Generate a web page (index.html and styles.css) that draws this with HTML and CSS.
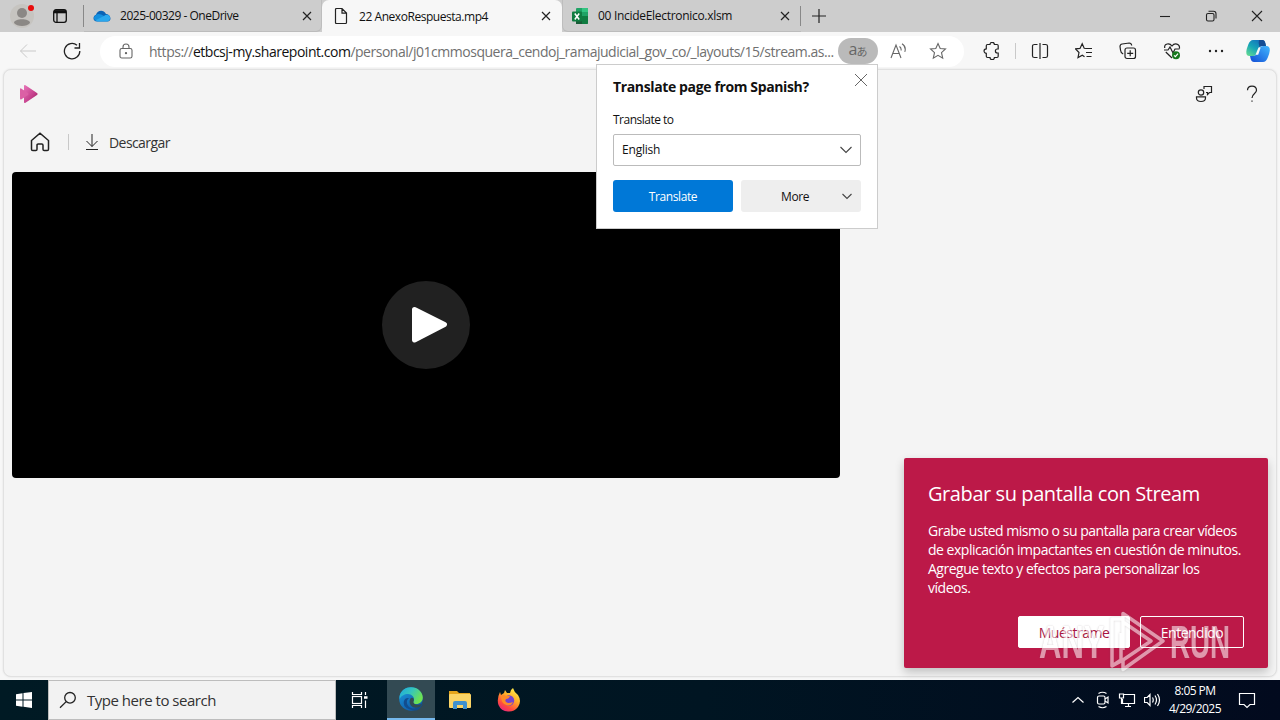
FILE: index.html
```html
<!DOCTYPE html>
<html lang="es">
<head>
<meta charset="utf-8">
<title>22 AnexoRespuesta.mp4</title>
<link rel="stylesheet" href="styles.css">
</head>
<body>
<div class="screen">
  <header class="tabstrip">
    <div class="profile"><svg width="44" height="32" viewBox="0 0 44 32"><circle cx="22" cy="16" r="12" fill="#c6c4c0"/><circle cx="22" cy="13" r="5" fill="#8b8885"/><path d="M14 23c0-5 16-5 16 0-3 4-13 4-16 0z" fill="#8b8885"/><circle cx="31" cy="8" r="3" fill="#e80c0c"/></svg></div>
    <div class="workspaces"><svg width="16" height="16" viewBox="0 0 16 16" fill="none" stroke="#111" stroke-width="1.3"><rect x="1.7" y="1.7" width="12.6" height="12.6" rx="2.3"/><path d="M2 3.7h12" stroke-width="3.2"/><path d="M5 5v9"/></svg></div>
    <div class="tab tab-first"><svg width="18" height="12" viewBox="0 0 18 12"><path d="M4 11.500C-.5 11.500-.5 6 3 4.700 4.500 0 10.500-.8 13 4c5 0 6.200 7.500 1.500 7.500z" fill="#0b63b5"/><path d="M3 5c2-2 5-1 8 1l4 5H4C1 11-.5 7 3 5z" fill="#1490df"/><path d="M3 10l8-4c3-3 7 0 6 3-1 3-3 2.500-5 2.500H4z" fill="#2ba8ed"/></svg><span class="tab-title t-one">2025-00329 - OneDrive</span><svg class="x" width="10" height="10" viewBox="0 0 10 10"><path d="M1 1l8 8M9 1L1 9"/></svg></div>
    <div class="tab tab-active"><svg width="14" height="18" viewBox="0 0 14 18" fill="none" stroke="#222" stroke-width="1.2"><path d="M1.500 2.500q0-1 1-1H8l4.500 4.500v9.500q0 1-1 1h-9q-1 0-1-1zM8 1.500v4.600h4.500"/></svg><span class="tab-title t-two">22 AnexoRespuesta.mp4</span><svg class="x" width="10" height="10" viewBox="0 0 10 10"><path d="M1 1l8 8M9 1L1 9"/></svg></div>
    <div class="tab tab-last"><svg width="16" height="16" viewBox="0 0 16 16"><rect x="4" width="12" height="16" rx="1" fill="#21a366"/><path d="M4 8h6v8H4z" fill="#185c37"/><path d="M10 8h6v7q0 1-1 1h-5z" fill="#107c41"/><path d="M10 0h5q1 0 1 1v3h-6z" fill="#33c481"/><rect y="3.500" width="10" height="10" rx="1" fill="#107c41"/><path d="M2.800 5.500l4.400 6M7.200 5.500l-4.400 6" stroke="#fff" stroke-width="1.500"/></svg><span class="tab-title t-three">00 IncideElectronico.xlsm</span><svg class="x" width="10" height="10" viewBox="0 0 10 10"><path d="M1 1l8 8M9 1L1 9"/></svg></div>
    <svg class="plus" width="14" height="14" viewBox="0 0 14 14"><path d="M7 0v14M0 7h14" stroke="#222" stroke-width="1.200"/></svg>
    <div class="window-buttons">
      <span><svg width="12" height="12" viewBox="0 0 12 12"><path d="M1 6.500h10" /></svg></span>
      <span><svg width="12" height="12" viewBox="0 0 12 12"><rect x="1.500" y="3.500" width="7.500" height="7.500" rx="1.500"/><path d="M3.500 1.300h5q2.500 0 2.500 2.500v4.700"/></svg></span>
      <span><svg width="12" height="12" viewBox="0 0 12 12"><path d="M1 1l10 10M11 1L1 11"/></svg></span>
    </div>
  </header>

  <nav class="toolbar">
    <span class="tool"><svg width="18" height="18" viewBox="0 0 18 18" stroke="#c9c9c9"><path d="M17 9H1.500M8 2.500L1.500 9 8 15.500"/></svg></span>
    <span class="tool"><svg width="18" height="18" viewBox="0 0 18 18" stroke-width="1.300"><path d="M16.800 9A7.700 7.700 0 1 1 14 3.200M16.500 1v5h-5"/></svg></span>
    <div class="address">
      <svg class="lock" width="14" height="16" viewBox="0 0 14 16"><rect x="1" y="5.500" width="12" height="9.500" rx="1.800"/><path d="M4 5.500V4a3 3 0 0 1 6 0v1.500"/><circle cx="7" cy="10.200" r=".6" fill="#666"/></svg>
      <span class="url">https://<b>etbcsj-my.sharepoint.com</b>/personal/j01cmmosquera_cendoj_ramajudicial_gov_co/_layouts/15/stream.as...</span>
      <span class="lang"><i class="lang-a">a</i><i class="lang-jp">あ</i></span>
      <span class="addr-tool"><svg width="18" height="16" viewBox="0 0 18 16"><path d="M2 15L7 2 12 15M3.800 10.500h6.500M10.500 3.500q2 1.500 1.600 4M13 .8q4.500 2.700 2.800 8"/></svg></span>
      <span class="addr-tool"><svg width="18" height="18" viewBox="0 0 18 18"><path d="M9 1.500l2.200 5 5.300.5-4 3.700 1.200 5.500L9 13.400l-4.700 2.800 1.200-5.500-4-3.700 5.300-.5z"/></svg></span>
    </div>
    <span class="tool"><svg width="18" height="18" viewBox="0 0 18 18" stroke-width="1.200"><path d="M4.500 2.500H7a2.200 2.200 0 0 1 4.400 0H14q1.200 0 1.200 1.200V7h-.8a2 2 0 0 0 0 4h.8v3.300q0 1.200-1.200 1.200h-2.600a2.200 2.200 0 0 1-4.400 0H4.500q-1.200 0-1.200-1.200v-3a2.200 2.200 0 0 1 0-4.500V3.700q0-1.200 1.200-1.200z"/></svg></span>
    <span class="tool-sep"></span>
    <span class="tool"><svg width="18" height="18" viewBox="0 0 18 18" stroke-width="1.200"><path d="M6.500 2.500h-3Q1.500 2.500 1.500 4v10q0 1.500 2 1.500h3M11.500 2.500h3q2 0 2 1.500v10q0 1.500-2 1.500h-3M9 1v16"/></svg></span>
    <span class="tool"><svg width="18" height="18" viewBox="0 0 18 18" stroke-width="1.200"><path d="M11 6.500l-1.800-.2-2-4.500-2.200 4.600-4.500.5L4 10.500l-1 5 4.300-2.300 2.200 1.500M10.500 6.500H17M11 10.500h6M11.500 14.500h5"/></svg></span>
    <span class="tool"><svg width="18" height="18" viewBox="0 0 18 18" stroke-width="1.200"><rect x="6" y="6" width="10.500" height="10.500" rx="2"/><path d="M11.200 8.300v6M8.200 11.300h6M4.200 12Q1.700 11 1.500 8L1 4.500Q1 2.300 3.200 2l7-1q2.200 0 2.500 2.500"/></svg></span>
    <span class="tool"><svg width="18" height="18" viewBox="0 0 18 18" stroke-width="1.200"><path d="M1.700 6C1 1.500 6.500.5 9 4c2.500-3.500 8-2.500 7.500 2.500M2.800 10L9 16M1 8h4l2-3 3 6 2-4h4.500"/><circle cx="13" cy="13.300" r="4" fill="#16791d" stroke="none"/><path d="M11 13.300l1.400 1.400 2.600-3" stroke="#fff"/></svg></span>
    <span class="tool"><svg width="18" height="18" viewBox="0 0 18 18" stroke="none"><g fill="#222"><circle cx="3" cy="9" r="1.200"/><circle cx="9" cy="9" r="1.200"/><circle cx="15" cy="9" r="1.200"/></g></svg></span>
    <span class="tool tool-copilot"><svg width="24" height="24" viewBox="0 0 24 24" stroke="none"><defs><linearGradient id="cg1" x1="0" y1="1" x2=".8" y2="0"><stop stop-color="#6be08e"/><stop offset=".5" stop-color="#16a5b7"/><stop offset="1" stop-color="#1469be"/></linearGradient><linearGradient id="cg2" x1="0" y1="1" x2="1" y2="0"><stop stop-color="#124cd4"/><stop offset="1" stop-color="#42b8ff"/></linearGradient></defs><path d="M7 1h9q2.500 0 3.300 3L20 7h-3.500q-3 0-4 3L11 14q-1 3-4 3H3.500Q0 17 .3 12.500q.2-2.500 2-7Q4 1 7 1z" fill="url(#cg1)"/><path d="M17 23H8q-2.500 0-3.300-3L4 17h3q3 0 4-3l2-4.500Q14 7 17 7h3.500q3.500 0 3.300 4.500-.2 2.500-2 7Q20 23 17 23z" fill="url(#cg2)"/><path d="M13 1h3.500q2.200 0 2.800 3L20 7h-4q-1.500 0-2.500 1-1.500-4-.5-7z" fill="#154d94"/><path d="M12.500 8.500h2.200l-2.500 7.300h-2.700z" fill="#f7f7f7"/></svg></span>
  </nav>

  <main class="page">
    <div class="app-header">
      <svg class="stream" width="20" height="20" viewBox="0 0 20 20"><defs><linearGradient id="st" x1="0" y1="0" x2="1" y2="1"><stop stop-color="#e775b9"/><stop offset=".6" stop-color="#c5408c"/><stop offset="1" stop-color="#901955"/></linearGradient></defs><path d="M5 2q0-1.500 1.500-.8L18 9q1.500 1 0 2L6.500 18.800Q5 19.500 5 18z" fill="url(#st)"/><path d="M1 5.500q0-1.800 1.500-.8L9 9q1.200 1 0 2l-6.500 4.300Q1 16.200 1 14.500z" fill="#db60a5"/></svg>
      <svg class="feedback" width="18" height="18" viewBox="0 0 18 18"><circle cx="6" cy="7.500" r="2.700"/><path d="M1.500 11.800h9v1.200q0 3.500-4.500 3.500t-4.500-3.500zM9 4V1.500h7.500v6h-2l-2 2v-2H11"/></svg>
      <svg class="help" width="12" height="18" viewBox="0 0 12 18"><path d="M1.500 5.300C1.500-.3 10.500-.3 10.500 5.300 10.500 8.500 6 8.500 6 13M6 15.500v1.300"/></svg>
    </div>
    <div class="commands">
      <svg class="home" width="20" height="20" viewBox="0 0 20 20"><path d="M1.500 8.500L10 1.300l8.500 7.200v8.700q0 1.300-1.300 1.300h-3q-1.200 0-1.200-1.300v-4q0-1.200-1.200-1.200H8.200Q7 12 7 13.200v4q0 1.300-1.200 1.300h-3q-1.300 0-1.300-1.300z"/></svg>
      <span class="cmd-sep"></span>
      <svg class="download" width="14" height="18" viewBox="0 0 14 18"><path d="M7 1v12.500M1.500 8L7 13.500 12.500 8M1 16.500h12"/></svg>
      <span class="descargar">Descargar</span>
    </div>
    <div class="video"><span class="play"><svg width="88" height="88" viewBox="0 0 88 88"><path d="M32.500 28.500L62.500 43.500 32.500 59z" fill="#fff" stroke="#fff" stroke-width="5" stroke-linejoin="round"/></svg></span></div>
  </main>

  <footer class="taskbar">
    <span class="start"><svg width="16" height="16" viewBox="0 0 16 16" fill="#fff"><path d="M0 2.200l6.500-.9v6.200H0zM7.500 1.100L16 0v7.500H7.500zM0 8.500h6.500v6.200L0 13.800zM7.500 8.500H16V16l-8.500-1.200z"/></svg></span>
    <div class="search"><svg width="18" height="18" viewBox="0 0 18 18" fill="none" stroke="#222" stroke-width="1.300"><circle cx="11" cy="6.800" r="5.300"/><path d="M7.200 10.600L1 16.800"/></svg><span>Type here to search</span></div>
    <span class="task"><svg width="18" height="18" viewBox="0 0 18 18" fill="none" stroke="#fff" stroke-width="1.200"><path d="M1.500 1v2.500h9V1M1.500 17v-2.500h9V17M14.500 1v3M14.500 9.500V17"/><rect x="1.500" y="5.500" width="9" height="7"/><path d="M13 6.500h3.500" stroke-width="2.500"/></svg></span>
    <span class="task task-active"><svg width="24" height="24" viewBox="0 0 24 24"><defs><linearGradient id="eg1" x1="0" y1="0" x2="1" y2=".5"><stop stop-color="#1da8df"/><stop offset=".5" stop-color="#35c5bd"/><stop offset="1" stop-color="#6fe34f"/></linearGradient><linearGradient id="eg2" x1="0" y1="0" x2=".7" y2="1"><stop stop-color="#1c9de0"/><stop offset="1" stop-color="#0e55a4"/></linearGradient></defs><circle cx="12" cy="12" r="11.800" fill="url(#eg2)"/><path d="M.6 9C2 3 6.500.2 12 .2c7 0 11.800 5 11.800 10.300 0 4-3 6.500-6.500 6.500-4 0-3.500-2-2.500-3.500C16 10 12.500 7 9 7 5.500 7 2 9 .6 12z" fill="url(#eg1)"/><path d="M10 11c-5 4-.5 11 5.500 10.500q4-.5 6.500-4l2-1q-4 8-9 7Q3 21.500 5 14q1-3.500 5-3z" fill="#124d8e"/><path d="M14.800 13.500c-1 2.500.5 4.300 4 4.300 1.500 0 3-.5 4-1.300l-1.500 3q-6 3-9.500-1-2.500-4 0-7.500 2-1 3 1z" fill="#324b52"/></svg></span>
    <span class="task"><svg width="22" height="20" viewBox="0 0 22 20"><path d="M0 1h8l2 2h11v5H0z" fill="#e5a51c"/><path d="M1 4h20q1 0 1 1v12q0 1-1 1H1q-1 0-1-1V5q0-1 1-1z" fill="#fbd466"/><path d="M4 19v-6q0-2 2-2h10q2 0 2 2v6h-4v-4H8v4z" fill="#3f91cf"/></svg></span>
    <span class="task"><svg width="24" height="24" viewBox="0 0 24 24"><defs><linearGradient id="fg" x1=".8" y1="0" x2=".2" y2="1"><stop stop-color="#fff34e"/><stop offset=".4" stop-color="#ffac29"/><stop offset=".75" stop-color="#ff493f"/><stop offset="1" stop-color="#e52286"/></linearGradient></defs><path d="M3 4l1 3 3-2 1-3 2 3 3 0q0-3 3-5 1 4 5 7 4 6 0 12-4 5-10 4.500Q4 23 1.500 17-.5 11 3 4z" fill="url(#fg)"/><circle cx="12" cy="12.500" r="5.200" fill="#7544cf"/><path d="M4 8q3-2 5 0h4q-1 3-4 3-2 3 2 4 3 0 5-1-2 5-7 3-5-2-5-9z" fill="#ff8b26"/></svg></span>
    <div class="tray">
      <svg width="14" height="18" viewBox="0 0 14 18"><path d="M1.500 11.500L7 6.500l5.500 5"/></svg>
      <svg width="14" height="18" viewBox="0 0 14 18"><rect x="1.500" y="5" width="7.500" height="8" rx="1.500"/><path d="M9 8l3-2v6l-3-2M2.500 2.500q4-2.500 8 0M2.500 15.500q4 2.500 8 0"/></svg>
      <svg width="18" height="18" viewBox="0 0 18 18"><path d="M6 3.500h10.500v9H4.500V8M7 15.500h6M10.500 12.500v3M1.500 3h4v4h-4zM3.500 7v6"/></svg>
      <svg width="18" height="18" viewBox="0 0 18 18"><path d="M.5 6.500h2.700L6 3.500v11l-2.800-3H.5zM8.500 6.500q1.500 2.500 0 5M11 4.500q3 4.500 0 9M13.500 3q4 6 0 12"/></svg>
      <div class="clock"><span>8:05 PM</span><span class="date">4/29/2025</span></div>
      <svg class="notice" width="18" height="18" viewBox="0 0 18 18"><path d="M1.500 2.500h15v11H12l-3 3-3-3H1.500z"/></svg>
    </div>
  </footer>

  <section class="translate">
    <svg class="close" width="14" height="14" viewBox="0 0 14 14"><path d="M1 1l12 12M13 1L1 13"/></svg>
    <h2>Translate page from Spanish?</h2>
    <label>Translate to</label>
    <div class="select"><span>English</span><svg width="12" height="8" viewBox="0 0 12 8"><path d="M.5 1L6 6.500 11.500 1"/></svg></div>
    <div class="buttons"><div class="btn btn-blue"><span>Translate</span></div><div class="btn btn-grey"><span>More</span><svg width="10" height="7" viewBox="0 0 10 7"><path d="M.5 1L5 5.500 9.500 1"/></svg></div></div>
  </section>

  <section class="coach">
    <h1>Grabar su pantalla con Stream</h1>
    <p>Grabe usted mismo o su pantalla para crear vídeos<br>de explicación impactantes en cuestión de minutos.<br>Agregue texto y efectos para personalizar los<br>vídeos.</p>
    <div class="coach-buttons"><span class="show">Muéstrame</span><span class="ok">Entendido</span></div>
  </section>
  <div class="watermark"><span class="any">ANY</span><svg width="56" height="64" viewBox="0 0 56 64"><path d="M14 40V3.500l40 27.500L14 59.500V50L42 31 14 12M13 9H3v47l9-6V23M14 50L3 56"/></svg><span class="run">RUN</span></div>
</div>
</body>
</html>
```
FILE: styles.css
```css
* { box-sizing: border-box; }
body { margin: 0; font-family: "Open Sans", "Noto Sans", sans-serif; font-size: 12px; color: #111; }
svg { display: block; flex: none; }
h1, h2, p { margin: 0; }
.screen { position: relative; display: flex; flex-direction: column; width: 1280px; height: 720px; background: #f7f7f7; overflow: hidden; white-space: nowrap; }

.tabstrip { display: flex; align-items: center; height: 32px; background: #cdcdcd; flex: none; }
.profile { width: 44px; }
.workspaces { width: 40px; height: 22px; padding: 3px 0 0 8px; border-right: 1px solid #888; }
.tab { display: flex; align-items: center; height: 32px; }
.tab-title { flex: 1; }
.x { stroke: #222; stroke-width: 1.2; }
.tab-first { width: 238px; padding: 0 9px 0 9px; gap: 9px; border-right: 1px solid #bdbdbd; border-bottom: 1px solid #bcbcbc; border-radius: 0 0 6px 0; }
.tab-active { width: 240px; padding: 0 11px 0 12px; gap: 11px; background: #f7f7f7; border-radius: 7px 7px 0 0; }
.tab-last { width: 239px; padding: 0 11px 0 9px; gap: 10px; border-bottom: 1px solid #bcbcbc; border-left: 1px solid #bdbdbd; border-radius: 0 0 0 6px; }
.tab-last::after { content: ""; height: 20px; width: 1px; background: #888; margin-right: -11px; }
.plus { margin-left: 11px; }
.t-one { letter-spacing: -0.48px; }
.t-two { letter-spacing: -0.45px; }
.t-three { letter-spacing: -0.3px; }
.window-buttons { display: flex; margin-left: auto; }
.window-buttons span { width: 46px; display: flex; justify-content: center; }
.window-buttons svg { fill: none; stroke: #222; stroke-width: 1.1; }

.toolbar { display: flex; align-items: center; height: 37px; padding: 1px 0 0 6px; flex: none; }
.tool { width: 44px; display: flex; justify-content: center; flex: none; }
.tool svg { fill: none; }
.tool svg:not([stroke]) { stroke: #222; }
.tool-sep { width: 1px; height: 16px; background: #c9c9c9; margin: 0 2px 0 1px; }
.tool-copilot { width: 40px; }
.address { display: flex; align-items: center; width: 864px; height: 31px; margin: 0 6px; padding-left: 19px; border-radius: 16px; background: #fff; }
.address svg { fill: none; stroke: #666; stroke-width: 1.1; }
.url { width: 689px; margin-left: 16px; color: #707070; font-size: 14px; letter-spacing: -0.48px; }
.url b { font-weight: 400; color: #111; }
.lang { display: flex; align-items: center; justify-content: center; width: 40px; height: 26px; border-radius: 13px; background: #bababa; color: #666; }
.lang i { font-style: normal; }
.lang-a { font-size: 16px; line-height: 20px; padding-bottom: 4px; }
.lang-jp { font: 11px "Noto Sans CJK JP", sans-serif; margin-left: -1px; }
.addr-tool { width: 40px; display: flex; justify-content: center; }

.page { margin: 0 3px; height: 608px; border: 1px solid #e1e1e1; border-radius: 8px; background: #f4f4f4; box-shadow: 0 0 2px #ddd; flex: none; }
.app-header { display: flex; align-items: center; height: 48px; padding: 0 18px 0 15px; }
.app-header svg:not(.stream), .commands svg { fill: none; stroke: #222; stroke-width: 1.2; }
.feedback { margin-left: auto; margin-right: 33px; }
.commands { display: flex; align-items: center; height: 48px; padding-left: 26px; }
.commands .home { stroke-width: 1.5; }
.commands .download { stroke-width: 1; }
.cmd-sep { width: 1px; height: 16px; margin: 0 16px 0 18px; background: #c8c8c8; }
.descargar { margin-left: 10px; font-size: 14px; color: #333; letter-spacing: -0.57px; }
.video { display: flex; align-items: center; justify-content: center; width: 828px; height: 306px; margin: 6px 0 0 8px; border-radius: 4px; background: #000; }
.play { width: 88px; height: 88px; border-radius: 50%; background: #212121; }

.taskbar { display: flex; height: 40px; margin-top: auto; background: linear-gradient(90deg, #001a24, #001522 55%, #020a1e); flex: none; color: #fff; }
.start, .task { display: flex; width: 48px; align-items: center; justify-content: center; }
.search { display: flex; align-items: center; width: 288px; gap: 10px; padding-left: 10px; background: #f2f2f2; border: 1px solid #bdbdbd; color: #333; font-size: 15px; letter-spacing: -0.48px; }
.task { width: 49px; }
.search + .task { width: 51px; padding-right: 3px; }
.task-active { width: 48px; background: #334a53; border-bottom: 2px solid #76b9ed; }
.tray { display: flex; align-items: center; margin-left: auto; padding-right: 24px; gap: 8px; }
.tray svg { fill: none; stroke: #fff; stroke-width: 1.2; }
.tray svg:first-child { margin-right: 3px; }
.clock { display: flex; flex-direction: column; width: 52px; margin: 0 1px 0 -1px; align-items: center; line-height: 18px; letter-spacing: -0.54px; }
.notice { margin-left: 8px; }

.translate { position: absolute; left: 596px; top: 64px; width: 282px; height: 165px; padding: 12px 16px; background: #fff; border: 1px solid #ccc; display: flex; flex-direction: column; }
.translate h2 { height: 20px; line-height: 20px; font-size: 14px; letter-spacing: -0.37px; }
.translate label { height: 17px; line-height: 18px; margin-top: 14px; letter-spacing: -0.5px; }
.select { display: flex; align-items: center; justify-content: space-between; height: 32px; margin-top: 6px; padding: 0 8px 1px; border: 1px solid #bbb; border-radius: 2px; letter-spacing: -0.2px; }
.translate svg { fill: none; stroke: #444; stroke-width: 1.1; }
.translate .close { position: absolute; right: 9px; top: 8px; stroke: #666; stroke-width: 1; }
.buttons { display: flex; gap: 8px; margin-top: 14px; }
.btn { display: flex; align-items: center; justify-content: center; height: 32px; width: 120px; border-radius: 3px; letter-spacing: -0.4px; }
.btn-blue { background: #0078d7; color: #fff; }
.btn-grey { background: #eee; justify-content: space-between; padding: 0 9px 0 40px; }

.coach { position: absolute; left: 904px; top: 458px; width: 364px; height: 210px; padding: 22px 24px 20px; border-radius: 2px; background: #bc1948; color: #fff; box-shadow: 0 4px 10px rgba(0,0,0,.22); }
.coach h1 { font-size: 20px; line-height: 28px; font-weight: 400; letter-spacing: -0.42px; }
.coach p { margin-top: 13px; font-size: 14px; line-height: 19px; letter-spacing: -0.48px; }
.coach-buttons { display: flex; gap: 10px; justify-content: flex-end; margin-top: 19px; font-size: 14px; letter-spacing: -0.5px; }
.coach-buttons span { display: flex; align-items: center; justify-content: center; height: 32px; border-radius: 2px; border: 1px solid #fff; }
.show { width: 112px; background: #fff; color: #a81543; }
.ok { width: 104px; }
.watermark { position: absolute; left: 1039px; top: 609px; display: flex; align-items: center; opacity: .55; color: #fff; font: bold 47px/66px "Liberation Sans", sans-serif; text-shadow: 0 0 2px rgba(90,70,80,.6); }
.watermark span { transform-origin: 0 50%; }
.any { width: 65px; transform: scaleX(.66); }
.run { width: 60px; transform: scaleX(.59); }
.watermark svg { margin: 0 5px 0 5px; fill: none; stroke: #fff; stroke-width: 3.5; stroke-linejoin: round; filter: drop-shadow(0 0 1px rgba(90,70,80,.4)); }
```
